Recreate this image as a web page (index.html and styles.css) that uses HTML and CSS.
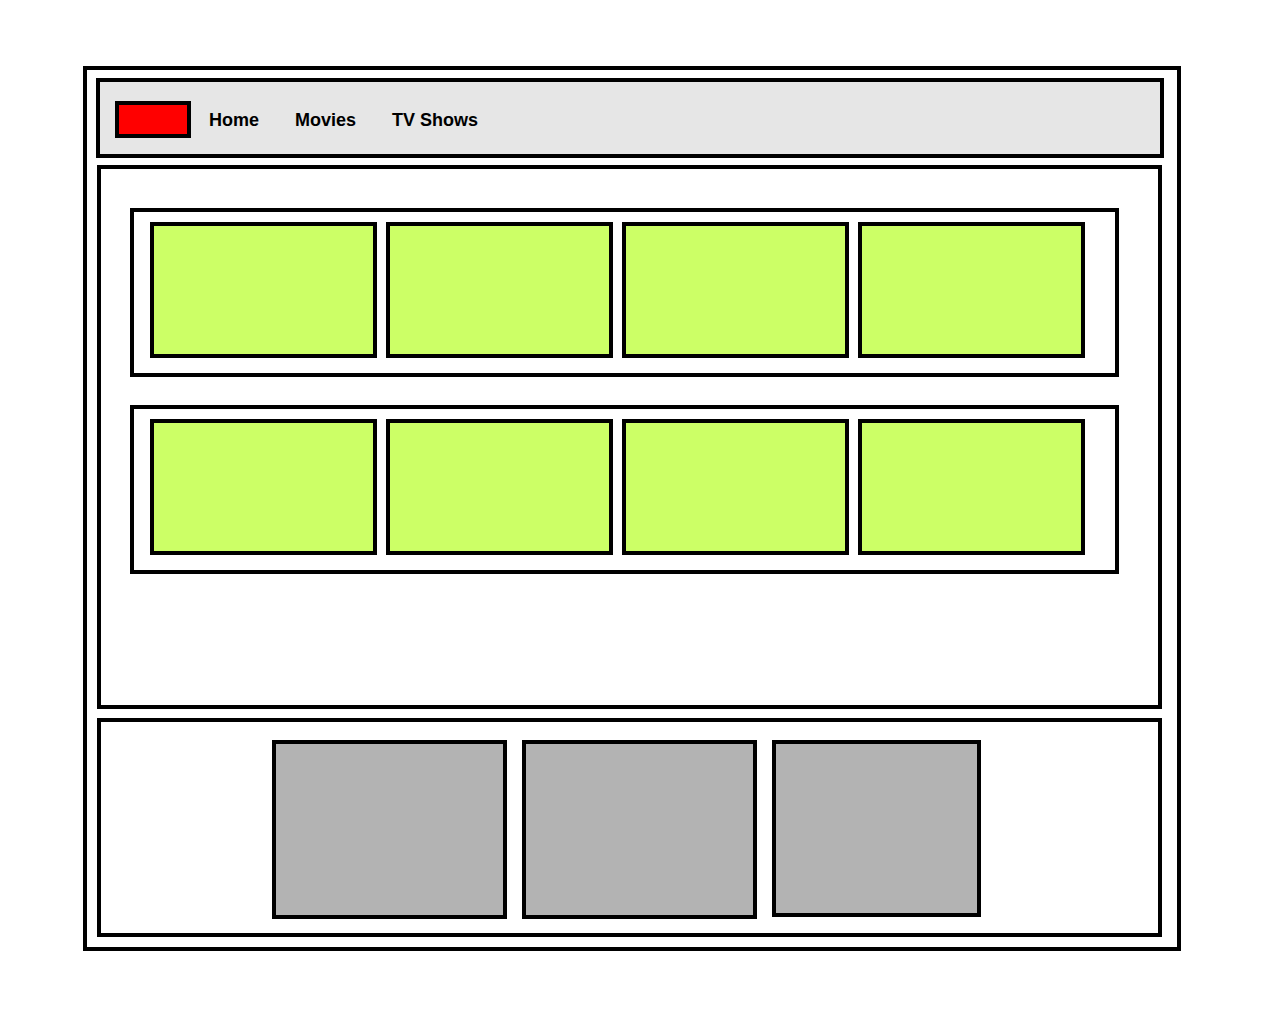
FILE: index.html
```html
<!DOCTYPE html>
<html lang="en">
<head>
  <meta charset="UTF-8">
  <meta name="viewport" content="width=device-width, initial-scale=1.0">
  <title>Streaming wireframe</title>
  <link rel="stylesheet" href="styles.css">
</head>
<body>
  <div class="frame">
    <!-- Top bar -->
    <header class="topbar">
      <div class="logo"></div>
      <nav class="nav">
        <a href="#" class="nav-link">Home</a>
        <a href="#" class="nav-link">Movies</a>
        <a href="#" class="nav-link">TV Shows</a>
      </nav>
    </header>

    <!-- Content rows -->
    <main class="content">
      <section class="row">
        <div class="card"></div>
        <div class="card"></div>
        <div class="card"></div>
        <div class="card"></div>
      </section>
      <section class="row">
        <div class="card"></div>
        <div class="card"></div>
        <div class="card"></div>
        <div class="card"></div>
      </section>
    </main>

    <!-- Bottom panel -->
    <footer class="footer">
      <div class="tile"></div>
      <div class="tile"></div>
      <div class="tile narrow"></div>
    </footer>
  </div>
</body>
</html>
```

FILE: styles.css
```css
* {
  box-sizing: border-box;
}

body {
  margin: 0;
  padding: 0;
  background: #fff;
  font-family: "Liberation Sans", Arial, sans-serif;
}

.frame {
  width: 1098px;
  height: 885px;
  margin: 66px 0 0 83px;
  padding: 8px 15px 10px 10px;
  border: 4px solid #000;
  display: flex;
  flex-direction: column;
}

/* Top bar */
.topbar {
  height: 80px;
  margin: 0 -2px 7px -1px;
  padding: 0 15px;
  border: 4px solid #000;
  background-color: #e6e6e6;
  display: flex;
  align-items: center;
}

.logo {
  width: 76px;
  height: 37px;
  border: 4px solid #000;
  background-color: #ff0000;
  margin-top: 2px;
}

.nav {
  display: flex;
  gap: 36px;
  margin: 4px 0 0 18px;
}

.nav-link {
  color: #000;
  text-decoration: none;
  font-size: 18px;
  font-weight: bold;
}

/* Content */
.content {
  height: 544px;
  border: 4px solid #000;
  padding: 39px 0 0 29px;
  display: flex;
  flex-direction: column;
  gap: 28px;
}

.row {
  width: 989px;
  height: 169px;
  border: 4px solid #000;
  padding: 10px 30px 0 16px;
  display: flex;
  gap: 9px;
  align-items: flex-start;
}

.card {
  width: 227px;
  height: 136px;
  border: 4px solid #000;
  background-color: #ccff66;
}

/* Footer */
.footer {
  height: 219px;
  margin-top: 9px;
  border: 4px solid #000;
  padding: 18px 7px 0 0;
  display: flex;
  justify-content: center;
  align-items: flex-start;
  gap: 15px;
}

.tile {
  width: 235px;
  height: 179px;
  border: 4px solid #000;
  background-color: #b3b3b3;
}

.tile.narrow {
  width: 209px;
  height: 177px;
}
```
